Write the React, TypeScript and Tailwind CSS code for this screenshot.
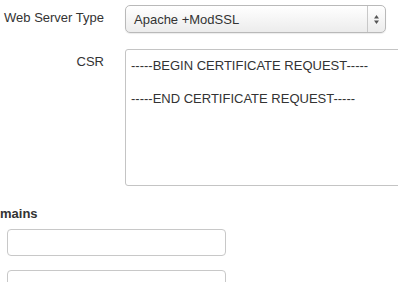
import React from "react";

export default function App() {
  return (
    <div
      className="w-[398px] h-[282px] overflow-hidden bg-white text-[#333] text-[13px]"
      style={{ fontFamily: '"Liberation Sans", Arial, sans-serif' }}
    >
      <div className="flex items-start pt-[5px]">
        <div className="w-[104px] shrink-0 text-right pt-[4px] leading-[18px]">Web Server Type</div>
        <div className="ml-[21px] w-[261px] h-[28px] shrink-0 flex rounded-[5px] border border-[#b9b9b9] bg-gradient-to-b from-[#ffffff] to-[#ececec] shadow-[0_1px_1px_rgba(0,0,0,0.08)]">
          <div className="flex-1 pl-[8px] flex items-center leading-none">Apache +ModSSL</div>
          <div className="w-[18px] border-l border-[#c8c8c8] flex items-center justify-center">
            <svg width="7" height="11" viewBox="0 0 7 11">
              <path d="M3.5 1 L6 4.5 L1 4.5 Z" fill="#555" />
              <path d="M3.5 10 L6 6.5 L1 6.5 Z" fill="#555" />
            </svg>
          </div>
        </div>
      </div>

      <div className="flex items-start mt-[16px]">
        <div className="w-[104px] shrink-0 text-right pt-[4px] leading-[18px]">CSR</div>
        <div className="ml-[21px] w-[300px] h-[137px] shrink-0 border border-[#c4c4c4] rounded-[3px] px-[5px] pt-[8px] whitespace-pre leading-[16.5px]">
          {"-----BEGIN CERTIFICATE REQUEST-----\n\n-----END CERTIFICATE REQUEST-----"}
        </div>
      </div>

      <div className="mt-[19px] font-bold leading-[18px]">mains</div>

      <div className="mt-[6px] ml-[7px] w-[219px] h-[27px] border border-[#c8c8c8] rounded-[4px]" />
      <div className="mt-[14px] ml-[7px] w-[219px] h-[27px] border border-[#c8c8c8] rounded-[4px]" />
    </div>
  );
}
